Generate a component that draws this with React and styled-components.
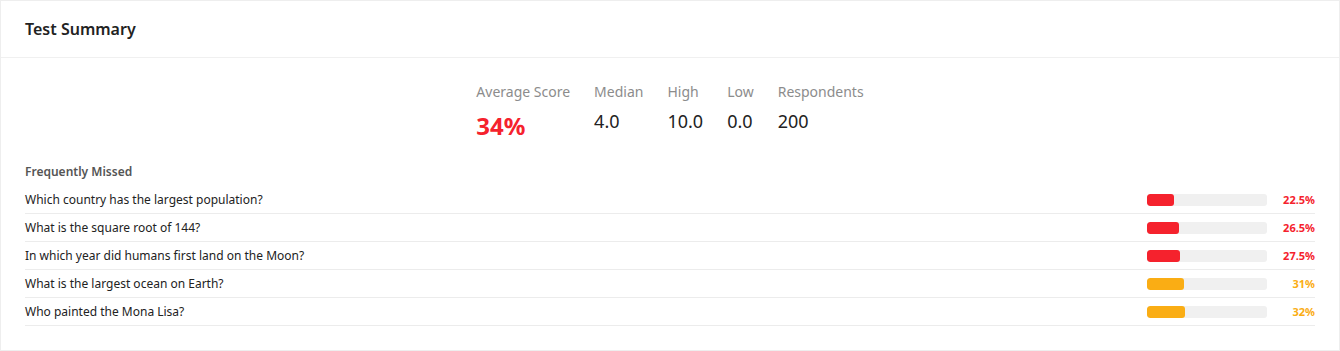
import styled, { createGlobalStyle } from 'styled-components';

const Global = createGlobalStyle`
  body {
    margin: 0;
    background: #ffffff;
    font-family: 'Noto Sans', 'Open Sans', sans-serif;
  }
`;

const stats = [
  { label: 'Average Score', value: '34%', main: true },
  { label: 'Median', value: '4.0' },
  { label: 'High', value: '10.0' },
  { label: 'Low', value: '0.0' },
  { label: 'Respondents', value: '200' },
];

const missed = [
  { q: 'Which country has the largest population?', pct: 22.5, label: '22.5%' },
  { q: 'What is the square root of 144?', pct: 26.5, label: '26.5%' },
  { q: 'In which year did humans first land on the Moon?', pct: 27.5, label: '27.5%' },
  { q: 'What is the largest ocean on Earth?', pct: 31, label: '31%' },
  { q: 'Who painted the Mona Lisa?', pct: 32, label: '32%' },
];

const colorFor = (pct) => (pct > 30 ? '#faad14' : '#f5222d');

export default function App() {
  return (
    <>
      <Global />
      <Card>
        <Header>
          <Title>Test Summary</Title>
        </Header>
        <Body>
          <Stats>
            {stats.map((s) => (
              <Stat key={s.label}>
                <StatLabel>{s.label}</StatLabel>
                <StatValue $main={s.main}>{s.value}</StatValue>
              </Stat>
            ))}
          </Stats>
          <SectionTitle>Frequently Missed</SectionTitle>
          <List>
            {missed.map((m) => (
              <Row key={m.q}>
                <Question>{m.q}</Question>
                <Track>
                  <Fill $color={colorFor(m.pct)} style={{ width: `${m.pct}%` }} />
                </Track>
                <Pct $color={colorFor(m.pct)}>{m.label}</Pct>
              </Row>
            ))}
          </List>
        </Body>
      </Card>
    </>
  );
}

const Card = styled.div`
  width: 1340px;
  height: 351px;
  box-sizing: border-box;
  border: 1px solid #eeeeee;
  background: #fff;
`;

const Header = styled.div`
  height: 57px;
  box-sizing: border-box;
  display: flex;
  align-items: center;
  padding: 0 24px;
  border-bottom: 1px solid #f0f0f0;
`;

const Title = styled.h2`
  margin: 0;
  font-size: 16px;
  font-weight: 600;
  color: #222;
`;

const Body = styled.div`
  padding: 24px 24px 0;
`;

const Stats = styled.div`
  display: flex;
  justify-content: center;
  gap: 24px;
`;

const Stat = styled.div`
  display: flex;
  flex-direction: column;
`;

const StatLabel = styled.div`
  font-size: 14px;
  line-height: 20px;
  color: #8c8c8c;
`;

const StatValue = styled.div`
  margin-top: ${(p) => (p.$main ? '10px' : '8px')};
  font-size: ${(p) => (p.$main ? '24px' : '18px')};
  line-height: ${(p) => (p.$main ? '28px' : '22px')};
  font-weight: ${(p) => (p.$main ? 700 : 400)};
  color: ${(p) => (p.$main ? '#f5222d' : '#222')};
`;

const SectionTitle = styled.div`
  margin-top: 23px;
  font-size: 12px;
  font-weight: 600;
  line-height: 18px;
  color: #555;
`;

const List = styled.div`
  margin-top: 5px;
  width: 1290px;
`;

const Row = styled.div`
  display: flex;
  align-items: center;
  height: 28px;
  box-sizing: border-box;
  border-bottom: 1px solid #ececec;
`;

const Question = styled.div`
  flex: 1;
  font-size: 12px;
  color: #222;
`;

const Track = styled.div`
  width: 120px;
  height: 12px;
  border-radius: 3px;
  background: #f0f0f0;
  overflow: hidden;
`;

const Fill = styled.div`
  height: 100%;
  border-radius: 3px;
  background: ${(p) => p.$color};
`;

const Pct = styled.div`
  width: 48px;
  text-align: right;
  font-size: 11px;
  font-weight: 700;
  color: ${(p) => p.$color};
`;
